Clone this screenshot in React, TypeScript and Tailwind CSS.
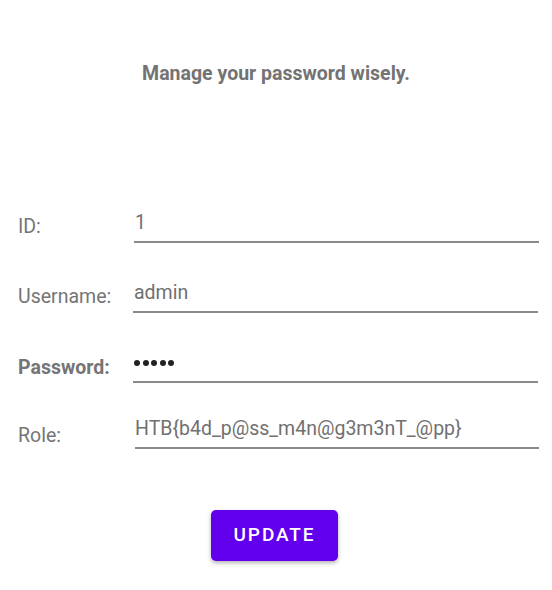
const fields = [
  { label: "ID:", value: "1", bold: false, top: "mt-[125px]", labelTop: "mt-[4px]", inset: "ml-0 mr-[13px]", pad: "pl-[1px]" },
  { label: "Username:", value: "admin", bold: false, top: "mt-[38px]", labelTop: "mt-[4px]", inset: "ml-[-1px] mr-[14px]", pad: "pl-[1px]" },
  { label: "Password:", value: "", bold: true, top: "mt-[38px]", labelTop: "mt-[5px]", inset: "ml-[-1px] mr-[14px]", pad: "pl-[1px]" },
  { label: "Role:", value: "HTB{b4d_p@ss_m4n@g3m3nT_@pp}", bold: false, top: "mt-[34px]", labelTop: "mt-[7px]", inset: "ml-[1px] mr-[13px]", pad: "pl-0" },
];

function PasswordDots() {
  return (
    <div className="flex h-[24px] items-center gap-[2.5px] pl-[1px]">
      {[0, 1, 2, 3, 4].map((i) => (
        <span key={`dot-${i}`} className="h-[6px] w-[6px] rounded-full bg-[#222222]" />
      ))}
    </div>
  );
}

export default function App() {
  return (
    <div className="h-[590px] w-[552px] bg-white font-['Roboto',sans-serif]">
      <p className="pt-[62px] text-center text-[19.5px] font-bold leading-[24px] text-[#737373]">
        Manage your password wisely.
      </p>
      {fields.map((field) => (
        <div key={field.label} className={`flex items-start ${field.top}`}>
          <span
            className={`w-[134px] shrink-0 pl-[18px] text-[19.5px] leading-[24px] text-[#757575] ${field.labelTop} ${
              field.bold ? "font-bold" : ""
            }`}
          >
            {field.label}
          </span>
          <div className={`flex-1 border-b-2 border-[#8a8a8a] pb-[6px] ${field.inset}`}>
            {field.bold ? (
              <PasswordDots />
            ) : (
              <span className={`block text-[19.5px] leading-[24px] text-[#707070] ${field.pad}`}>{field.value}</span>
            )}
          </div>
        </div>
      ))}
      <div className="mt-[61px] flex justify-center pr-[3px]">
        <button className="h-[51px] w-[127px] rounded-[5px] bg-[#6200ee] text-[19px] font-medium tracking-[0.1em] text-white shadow-[0_2px_4px_rgba(0,0,0,0.3)]">
          UPDATE
        </button>
      </div>
    </div>
  );
}
